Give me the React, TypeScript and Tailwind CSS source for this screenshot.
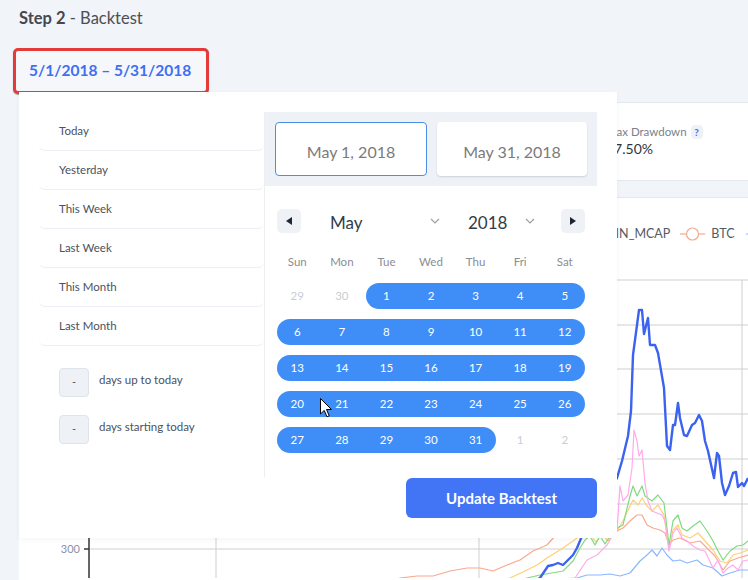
import React from 'react'

const presets = ['Today', 'Yesterday', 'This Week', 'Last Week', 'This Month', 'Last Month']
const dayNames = ['Sun', 'Mon', 'Tue', 'Wed', 'Thu', 'Fri', 'Sat']

const colStart = ['col-start-1', 'col-start-2', 'col-start-3', 'col-start-4', 'col-start-5', 'col-start-6', 'col-start-7']
const colEnd = ['col-end-2', 'col-end-3', 'col-end-4', 'col-end-5', 'col-end-6', 'col-end-7', 'col-end-8']

type Week = { days: { n: number; inMonth: boolean }[]; from: number; to: number }

const weeks: Week[] = [
  { days: [29, 30, 1, 2, 3, 4, 5].map((n, i) => ({ n, inMonth: i > 1 })), from: 2, to: 6 },
  { days: [6, 7, 8, 9, 10, 11, 12].map((n) => ({ n, inMonth: true })), from: 0, to: 6 },
  { days: [13, 14, 15, 16, 17, 18, 19].map((n) => ({ n, inMonth: true })), from: 0, to: 6 },
  { days: [20, 21, 22, 23, 24, 25, 26].map((n) => ({ n, inMonth: true })), from: 0, to: 6 },
  { days: [27, 28, 29, 30, 31, 1, 2].map((n, i) => ({ n, inMonth: i < 5 })), from: 0, to: 4 },
]

const series = [
  { color: '#8ab8ff', w: 1.2, pts: '440,590 470,585 500,582 530,582 560,581 577,580 587,577 600,577 610,576 620,578 630,575 640,563 647,557 652,552 657,558 662,550 667,557 673,563 680,562 687,565 697,562 703,567 713,570 722,578 730,575 740,572 748,572' },
  { color: '#f8a98f', w: 1.2, pts: '380,590 400,580 417,578 433,578 450,573 467,570 480,570 493,573 507,567 520,562 533,553 547,547 555,538 580,530 617,533 623,530 630,523 637,517 642,517 647,527 653,530 660,532 665,535 669,547 673,542 680,540 690,545 700,543 707,550 715,558 723,572 730,563 738,560 748,557' },
  { color: '#ffd074', w: 1.2, pts: '480,590 510,580 527,572 537,567 547,560 563,550 573,543 580,538 590,536 596,544 602,536 608,543 614,536 617,533 623,523 630,508 633,502 638,507 642,500 647,508 652,513 658,507 664,517 669,552 673,532 678,527 682,537 690,540 698,535 705,543 713,552 720,563 727,565 733,557 740,555 748,552' },
  { color: '#80db80', w: 1.2, pts: '500,590 527,580 540,577 552,575 563,573 573,563 580,550 585,542 590,538 595,547 600,538 605,546 610,538 617,530 623,527 630,498 633,488 637,498 642,488 645,498 652,503 658,497 664,505 669,547 673,523 678,517 682,530 687,533 693,528 700,523 707,533 713,543 718,553 723,562 730,553 737,548 743,547 748,543' },
  { color: '#ffabec', w: 1.2, pts: '560,590 575,580 587,562 597,557 607,547 613,537 617,533 620,488 623,503 628,497 632,470 634,432 637,443 639,458 642,452 645,485 648,503 652,513 657,515 662,517 665,523 669,553 673,535 677,530 682,540 687,543 693,548 700,552 705,553 713,570 718,562 723,575 728,570 733,567 738,572 743,563 748,562' },
  { color: '#3b63f0', w: 2.4, pts: '520,590 540,580 548,568 553,567 558,565 563,567 568,562 573,557 577,550 582,538 600,510 617,480 622,463 628,438 631,413 633,357 637,327 639,312 642,312 644,336 648,320 650,347 655,347 658,355 664,390 667,448 670,452 673,427 675,427 678,405 680,420 684,437 687,438 692,427 695,425 699,417 702,423 705,443 708,453 714,480 717,455 719,458 722,485 725,497 729,488 733,475 736,474 738,489 742,485 744,488 748,480' },
]

function Chart() {
  const rows = [282, 327, 371, 416, 461, 506, 551]
  const cols = [216, 479, 742]
  return (
    <svg width="729" height="330" className="block">
      <g transform="translate(-19,-250)">
        {rows.map((y) => (
          <line key={y} x1="89" x2="748" y1={y} y2={y} stroke="#cfcfcf" strokeWidth="1" />
        ))}
        {cols.map((x) => (
          <line key={x} x1={x} x2={x} y1="282" y2="590" stroke="#cfcfcf" strokeWidth="1" />
        ))}
        <line x1="89" x2="89" y1="282" y2="590" stroke="#333" strokeWidth="1.5" />
        <line x1="84" x2="89" y1="551" y2="551" stroke="#333" strokeWidth="1.5" />
        <text x="80" y="555" textAnchor="end" fontSize="11" fill="#8b8fa8" fontFamily="Lato, sans-serif">300</text>
        {series.map((s, i) => (
          <polyline key={i} points={s.pts} fill="none" stroke={s.color} strokeWidth={s.w} strokeLinejoin="round" />
        ))}
      </g>
    </svg>
  )
}

function Chevron() {
  return (
    <svg width="10" height="6" viewBox="0 0 10 6">
      <polyline points="1,1 5,5 9,1" fill="none" stroke="#9aa0a8" strokeWidth="1.2" />
    </svg>
  )
}

function Popup() {
  return (
    <div className="absolute left-[19px] top-[92px] w-[598px] h-[446px] bg-white p-[20px] shadow-[0_2px_6px_rgba(0,0,0,0.04)]">
      <div className="flex h-[366px]">
        <div className="w-[226px] border-r border-[#eceef2] h-[365px]">
          {presets.map((p) => (
            <div key={p} className="h-[39px] flex items-center pl-[20px] border-b border-[#eceff3] rounded-[6px] text-[11.5px] text-[#4a5160]">
              {p}
            </div>
          ))}
          <div className="mt-[22px] pl-[20px] flex flex-col gap-[18px]">
            {['days up to today', 'days starting today'].map((t) => (
              <div key={t} className="flex items-start gap-[10px]">
                <div className="w-[30px] h-[29px] bg-[#eef2f7] border border-[#dfe4ea] rounded-[4px] flex items-center justify-center text-[11px] text-[#555]">-</div>
                <div className="pt-[4px] text-[11.5px] leading-[16px] text-[#4a5160]">{t}</div>
              </div>
            ))}
          </div>
        </div>
        <div className="flex-1">
          <div className="h-[74px] bg-[#eef1f6] p-[10px] flex gap-[10px]">
            <div className="flex-1 bg-white border border-[#4a8fe6] rounded-[4px] flex items-center justify-center pt-[5px] text-[16px] text-[#7b7b7b]">May 1, 2018</div>
            <div className="flex-1 bg-white rounded-[4px] shadow-[0_1px_2px_rgba(0,0,0,0.14)] flex items-center justify-center pt-[5px] text-[16px] text-[#7b7b7b]">May 31, 2018</div>
          </div>
          <div className="mt-[23px] h-[24px] px-[12px] flex items-center">
            <div className="w-[24px] h-[24px] bg-[#eef1f6] rounded-[5px] flex items-center justify-center">
              <svg width="6" height="8" viewBox="0 0 6 8"><polygon points="6,0 6,8 0,4" fill="#1f2633" /></svg>
            </div>
            <div className="w-[144px] h-[24px] flex items-center justify-between pl-[29px] pr-[5px]">
              <span className="text-[17px] leading-[20px] pt-[3px] text-[#343b47]">May</span>
              <Chevron />
            </div>
            <div className="w-[116px] h-[24px] flex items-center justify-between pl-[23px] pr-[26px]">
              <span className="text-[17px] leading-[20px] pt-[3px] text-[#343b47]">2018</span>
              <Chevron />
            </div>
            <div className="w-[24px] h-[24px] bg-[#eef1f6] rounded-[5px] flex items-center justify-center">
              <svg width="6" height="8" viewBox="0 0 6 8"><polygon points="0,0 6,4 0,8" fill="#1f2633" /></svg>
            </div>
          </div>
          <div className="mt-[20px] mx-[10px] grid grid-cols-7 h-[18px] items-center text-[11.5px] text-[#8a8d93]">
            {dayNames.map((d) => (
              <div key={d} className="text-center">{d}</div>
            ))}
          </div>
          <div className="mt-[12px] mx-[10px] flex flex-col gap-[10px]">
            {weeks.map((w, wi) => (
              <div key={wi} className="grid grid-cols-7 h-[26px]">
                <div className={`row-start-1 ${colStart[w.from]} ${colEnd[w.to]} mx-[2px] bg-[#3f8ef7] rounded-full`} />
                {w.days.map((d, i) => (
                  <div
                    key={i}
                    className={`row-start-1 ${colStart[i]} flex items-center justify-center text-[11.5px] ${d.inMonth ? 'text-white' : 'text-[#c9cdd3]'}`}
                  >
                    {d.n}
                  </div>
                ))}
              </div>
            ))}
          </div>
        </div>
      </div>
      <div className="flex justify-end">
        <button className="w-[191px] h-[40px] rounded-[6px] bg-[#4274f6] text-white text-[15px] font-bold">Update Backtest</button>
      </div>
    </div>
  )
}

export default function App() {
  return (
    <div className="relative w-[748px] h-[580px] overflow-hidden bg-[#f1f4f9] font-['Lato',sans-serif] flex flex-col">
      <div className="pl-[19px] pt-[8px] text-[16.5px] leading-[20px] text-[#4b4f56]">
        <span className="font-bold text-[#45484e]">Step 2</span> - Backtest
      </div>
      <div className="ml-[13px] mt-[20px] w-[196px] h-[46px] border-[3px] border-[#e53a3a] rounded-[5px] bg-[#f5f7fb] shadow-[0_1px_1px_rgba(0,0,0,0.35)] flex items-center pl-[13px] text-[15.5px] font-bold text-[#3e6ff2]">
        5/1/2018 – 5/31/2018
      </div>
      <div className="ml-[19px] mt-[8px] h-[79px] shrink-0 bg-white border-y border-[#e3e7ee] flex pl-[587px] pt-[21px] whitespace-nowrap">
        <div className="shrink-0">
          <div className="flex items-center gap-[4px] h-[16px] text-[11.5px] text-[#7a7f8a]">
            Max Drawdown
            <span className="w-[12px] h-[14px] rounded-[4px] bg-[#eef1f8] text-[#3d6ef0] text-[10px] font-bold flex items-center justify-center">?</span>
          </div>
          <div className="text-[14px] leading-[18px] text-[#2f3440]">17.50%</div>
        </div>
      </div>
      <div className="ml-[19px] mt-[16px] flex-1 bg-white border-t border-[#e3e7ee]">
        <div className="pt-[28px] h-[44px] pl-[585px] flex items-center text-[12.5px] text-[#555a63] whitespace-nowrap">
          <span>MIN_MCAP</span>
          <svg width="25" height="14" className="ml-[10px] shrink-0" viewBox="0 0 25 14">
            <line x1="0" x2="25" y1="7" y2="7" stroke="#f7a88f" strokeWidth="1.2" />
            <circle cx="12.5" cy="7" r="6" fill="white" stroke="#f7a88f" strokeWidth="1.2" />
          </svg>
          <span className="ml-[6px]">BTC</span>
          <svg width="25" height="14" className="ml-[11px] shrink-0" viewBox="0 0 25 14">
            <line x1="0" x2="25" y1="7" y2="7" stroke="#8ab8ff" strokeWidth="1.2" />
          </svg>
        </div>
        <div className="mt-[6px]">
          <Chart />
        </div>
      </div>
      <Popup />
      <svg className="absolute left-[320px] top-[398px]" width="13" height="20" viewBox="0 0 13 20">
        <path d="M0.5,0.5 L0.5,16 L4.2,12.4 L7,18.8 L9.2,17.8 L6.5,11.5 L11.5,11.5 Z" fill="white" stroke="black" strokeWidth="1" strokeLinejoin="round" />
      </svg>
    </div>
  )
}
